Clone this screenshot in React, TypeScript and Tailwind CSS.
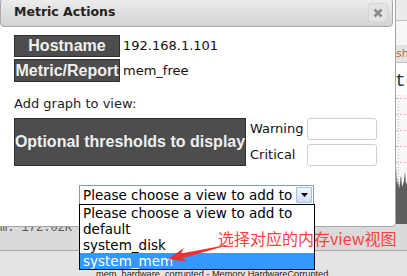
import React from "react";

function Chart() {
  const pinkYs = [3, 19, 35, 51, 67, 83, 99, 115];
  return (
    <svg width="407" height="129" className="block shrink-0">
      <rect width="407" height="129" fill="#f8f8f8" />
      {pinkYs.map((y) => (
        <line key={y} x1="0" x2="407" y1={y + 0.5} y2={y + 0.5} stroke="#f0b4b4" strokeDasharray="2 2" />
      ))}
      <line x1="398.5" x2="398.5" y1="0" y2="129" stroke="#b8b8b8" strokeDasharray="1 2" />
      <path
        d="M393 129 L393 95 L395 88 L396 72 L397 90 L398 84 L399 94 L400 88 L401 80 L402 92 L404 86 L405 76 L406 90 L407 86 L407 129 Z"
        fill="#5e5e5e"
      />
    </svg>
  );
}

function CloseIcon() {
  return (
    <svg width="10" height="10" viewBox="0 0 10 10">
      <path d="M1.5 1.5 L8.5 8.5 M8.5 1.5 L1.5 8.5" stroke="#8a8a8a" strokeWidth="2.6" strokeLinecap="butt" />
    </svg>
  );
}

function Arrow() {
  return (
    <svg width="407" height="276" className="absolute left-0 top-0 pointer-events-none">
      <polygon
        points="168,259 183.9,248.1 181,253.4 232,244 182.2,258.2 187.1,261.7"
        fill="#f03030"
      />
    </svg>
  );
}

export default function App() {
  return (
    <div className="relative w-[407px] h-[276px] overflow-hidden bg-[#f4f4f4] font-['DejaVu_Sans',sans-serif]">
      {/* background page */}
      <div className="flex flex-col h-full">
        <div className="h-[21px] shrink-0 bg-[#ebebeb] border-b border-[#bdbdbd]" />
        <div className="h-[24px] shrink-0 bg-[#f6f6f6]" />
        <div className="h-[18px] shrink-0 bg-[#e3e3e3] border-b border-[#c4c4c4] pl-[396px] text-[11px] leading-[17px] text-[#b8732e] whitespace-nowrap overflow-hidden">
          shipping
        </div>
        <div className="h-[32px] shrink-0 bg-white pl-[395px] pt-[8px] font-['Liberation_Mono',monospace] text-[18px] leading-[20px] text-[#333] whitespace-nowrap overflow-hidden">
          test
        </div>
        <Chart />
        <div className="h-[27px] shrink-0 bg-[#dadada] border-b border-[#a9a9a9] whitespace-nowrap overflow-hidden">
          <div className="-mt-[3px] font-['Liberation_Mono',monospace] text-[12px] leading-[14px] text-[#555]">
            m: 172.02K
          </div>
        </div>
        <div className="flex-1 bg-[#e4e4e4] pl-[96px] pt-[17px] font-['Liberation_Sans',sans-serif] text-[9.2px] leading-[12px] text-[#222] whitespace-nowrap overflow-hidden">
          mem_hardware_corrupted - Memory HardwareCorrupted
        </div>
      </div>

      {/* dialog */}
      <div className="absolute left-[-3px] top-[-5px] w-[399px] h-[232px] box-border border border-[#a6a6a6] rounded-[4px] bg-white p-[2px] flex flex-col">
        <div className="h-[29px] shrink-0 box-border border border-[#aaaaaa] rounded-[4px] bg-gradient-to-b from-[#ededed] to-[#d3d3d3] flex items-center pl-[13px]">
          <span className="font-bold text-[12.5px] text-[#222]">Metric Actions</span>
          <div className="ml-auto mr-[4px] w-[20px] h-[19px] rounded-[3px] bg-[#e3e3e3] border border-[#d6d6d6] flex items-center justify-center">
            <CloseIcon />
          </div>
        </div>

        <div className="pl-[14px] pt-[8px] flex flex-col">
          <div className="flex flex-col gap-[2px]">
            <div className="flex items-center gap-[3px]">
              <div className="w-[106px] h-[22px] box-border bg-[#4d4d4d] border border-[#2f2f2f] flex items-center justify-center font-['Liberation_Sans',sans-serif] font-bold text-[16px] text-[#f0f0f0]">
                Hostname
              </div>
              <span className="text-[13px] text-[#111]">192.168.1.101</span>
            </div>
            <div className="flex items-center gap-[3px]">
              <div className="w-[106px] h-[23px] box-border bg-[#4d4d4d] border border-[#2f2f2f] flex items-center justify-center font-['Liberation_Sans',sans-serif] font-bold text-[16px] text-[#f0f0f0] whitespace-nowrap">
                Metric/Report
              </div>
              <span className="text-[13px] text-[#111]">mem_free</span>
            </div>
          </div>

          <div className="mt-[14px] text-[13px] leading-[15px] text-[#222]">Add graph to view:</div>

          <div className="mt-[7px] flex">
            <div className="w-[232px] h-[48px] box-border bg-[#4d4d4d] border border-[#2f2f2f] flex items-center justify-center font-['Liberation_Sans',sans-serif] font-bold text-[16px] text-[#f0f0f0] whitespace-nowrap">
              Optional thresholds to display
            </div>
            <div className="ml-[4px] flex flex-col gap-[4px]">
              <div className="flex items-center h-[22px]">
                <span className="w-[57px] text-[13px] text-[#111]">Warning</span>
                <div className="w-[70px] h-[22px] box-border border border-[#cfcfcf] rounded-[3px] bg-white" />
              </div>
              <div className="flex items-center h-[22px]">
                <span className="w-[57px] text-[13px] text-[#111]">Critical</span>
                <div className="w-[70px] h-[22px] box-border border border-[#cfcfcf] rounded-[3px] bg-white" />
              </div>
            </div>
          </div>

          <div className="mt-[19px] ml-[65px] w-[235px] h-[20px] box-border border border-[#7f9db9] bg-white flex items-center">
            <span className="pl-[3px] text-[13.5px] leading-[18px] text-black whitespace-nowrap">
              Please choose a view to add to
            </span>
            <div className="ml-auto mr-[1px] w-[16px] h-[16px] box-border border border-[#a9bde9] rounded-[1px] bg-gradient-to-b from-[#eef3fd] to-[#d2defa] flex items-center justify-center">
              <svg width="7" height="4" viewBox="0 0 7 4">
                <polygon points="0,0 7,0 3.5,4" fill="#000" />
              </svg>
            </div>
          </div>
        </div>
      </div>

      {/* open dropdown list */}
      <div className="absolute left-[79px] top-[204px] w-[236px] box-border border border-black bg-white text-[13.5px] leading-[16px] text-black">
        <div className="h-[16px] pl-[3px] whitespace-nowrap">Please choose a view to add to</div>
        <div className="h-[16px] pl-[3px]">default</div>
        <div className="h-[16px] pl-[3px]">system_disk</div>
        <div className="h-[16px] pl-[3px] bg-[#3399ff] text-white">system_mem</div>
      </div>

      {/* annotation */}
      <Arrow />
      <div className="absolute left-[218px] top-[229px] font-['Noto_Sans_CJK_SC','Noto_Sans',sans-serif] text-[16px] leading-[18px] text-[#ff4040] whitespace-nowrap">
        选择对应的内存view视图
      </div>
    </div>
  );
}
